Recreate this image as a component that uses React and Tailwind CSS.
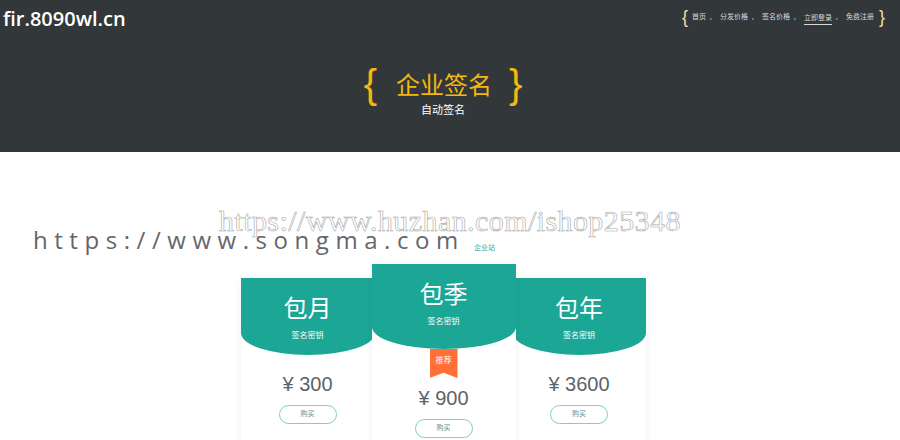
const NAV = ["首页", "分发价格", "签名价格", "立即登录", "免费注册"];

function NavBar() {
  return (
    <div className="flex items-center justify-between pl-[3px] pr-[15px] h-[37px]">
      <a className="text-[20px] leading-[37px] font-semibold text-white -mt-[1px]">fir.8090wl.cn</a>
      <ul className="flex items-center text-[7px] text-[#d5d8d8] -mt-[2px]">
        <li className="text-[18px] leading-[19px] text-[#f0dca0] mr-[4px] font-['Liberation_Sans',sans-serif]">{"{"}</li>
        {NAV.map((item, i) => (
          <li key={item} className="flex items-center">
            <span className={i === 3 ? "border-b border-[#d5d8d8] pb-[1px] pt-[3px] w-[28px] text-center" : "py-[3px]"}>{item}</span>
            {i < NAV.length - 1 && <span className="w-[3px] ml-[4px] mr-[7px] text-white">,</span>}
          </li>
        ))}
        <li className="text-[18px] leading-[19px] text-[#f0dca0] ml-[5px] font-['Liberation_Sans',sans-serif]">{"}"}</li>
      </ul>
    </div>
  );
}

function Plan({ name, price, featured, className }) {
  return (
    <div className={`bg-white shadow-[0_0_8px_rgba(0,0,0,0.06)] flex flex-col items-center ${className}`}>
      <div className={`w-full bg-[#1ca696] text-white text-center rounded-b-[50%_22px] pt-[12px] ${featured ? "h-[85px]" : "h-[77px]"}`}>
        <h3 className="text-[24px] leading-[36px]">{name}</h3>
        <p className="text-[8px] leading-[12px] mt-[3px]">签名密钥</p>
      </div>
      {featured && (
        <div className="w-[28px] h-[29px] bg-[#ff6f36] text-white text-[8px] leading-[22px] text-center [clip-path:polygon(0_0,100%_0,100%_100%,50%_82%,0_100%)]">推荐</div>
      )}
      <p className={`text-[20px] leading-[24px] text-[#5e6368] font-['Liberation_Sans',sans-serif] ${featured ? "mt-[8px]" : "mt-[17px]"}`}>¥ {price}</p>
      <button className="mt-[9px] w-[58px] h-[19px] rounded-full border border-[#7fcfc5] text-[7px] text-[#5f8f8a] bg-white">购买</button>
    </div>
  );
}

export default function App() {
  return (
    <div className="relative w-[900px] h-[440px] overflow-hidden bg-white font-['Open_Sans','Noto_Sans_CJK_SC',sans-serif]">
      <header className="bg-[#32373a] h-[152px]">
        <NavBar />
        <div className="flex justify-center items-start gap-[19px] mt-[25px] ml-[-14px]">
          <span className="text-[40px] leading-[44px] text-[#f5b70f] font-['Liberation_Sans',sans-serif]">{"{"}</span>
          <div className="text-center w-[94px] pt-[6px]">
            <h1 className="text-[24px] leading-[34px] text-[#f5b70f] whitespace-nowrap">企业签名</h1>
            <p className="text-[11px] leading-[14px] mt-[1px] text-white">自动签名</p>
          </div>
          <span className="text-[40px] leading-[44px] text-[#f5b70f] font-['Liberation_Sans',sans-serif]">{"}"}</span>
        </div>
      </header>

      <section className="flex justify-center pt-[112px] mr-[14px]">
        <Plan name="包月" price="300" className="w-[134px] mt-[14px] h-[170px]" />
        <Plan name="包季" price="900" featured className="w-[144px] h-[190px] z-10 -mx-[3px]" />
        <Plan name="包年" price="3600" className="w-[133px] mt-[14px] h-[170px]" />
      </section>

      <p className="absolute left-[219px] top-[203px] text-[30px] leading-[36px] whitespace-nowrap text-transparent font-['Liberation_Serif',serif] tracking-[0.42px] [-webkit-text-stroke:0.6px_#a9a9a9]">https://www.huzhan.com/ishop25348</p>
      <p className="absolute left-[33px] top-[222px] text-[24px] leading-[36px] whitespace-nowrap text-[#66666b] tracking-[6.55px] font-['Open_Sans',sans-serif]">https://www.songma.com</p>
      <p className="absolute left-[474px] top-[243px] text-[7px] leading-[10px] text-[#2aa9a4]">企业站</p>
    </div>
  );
}
